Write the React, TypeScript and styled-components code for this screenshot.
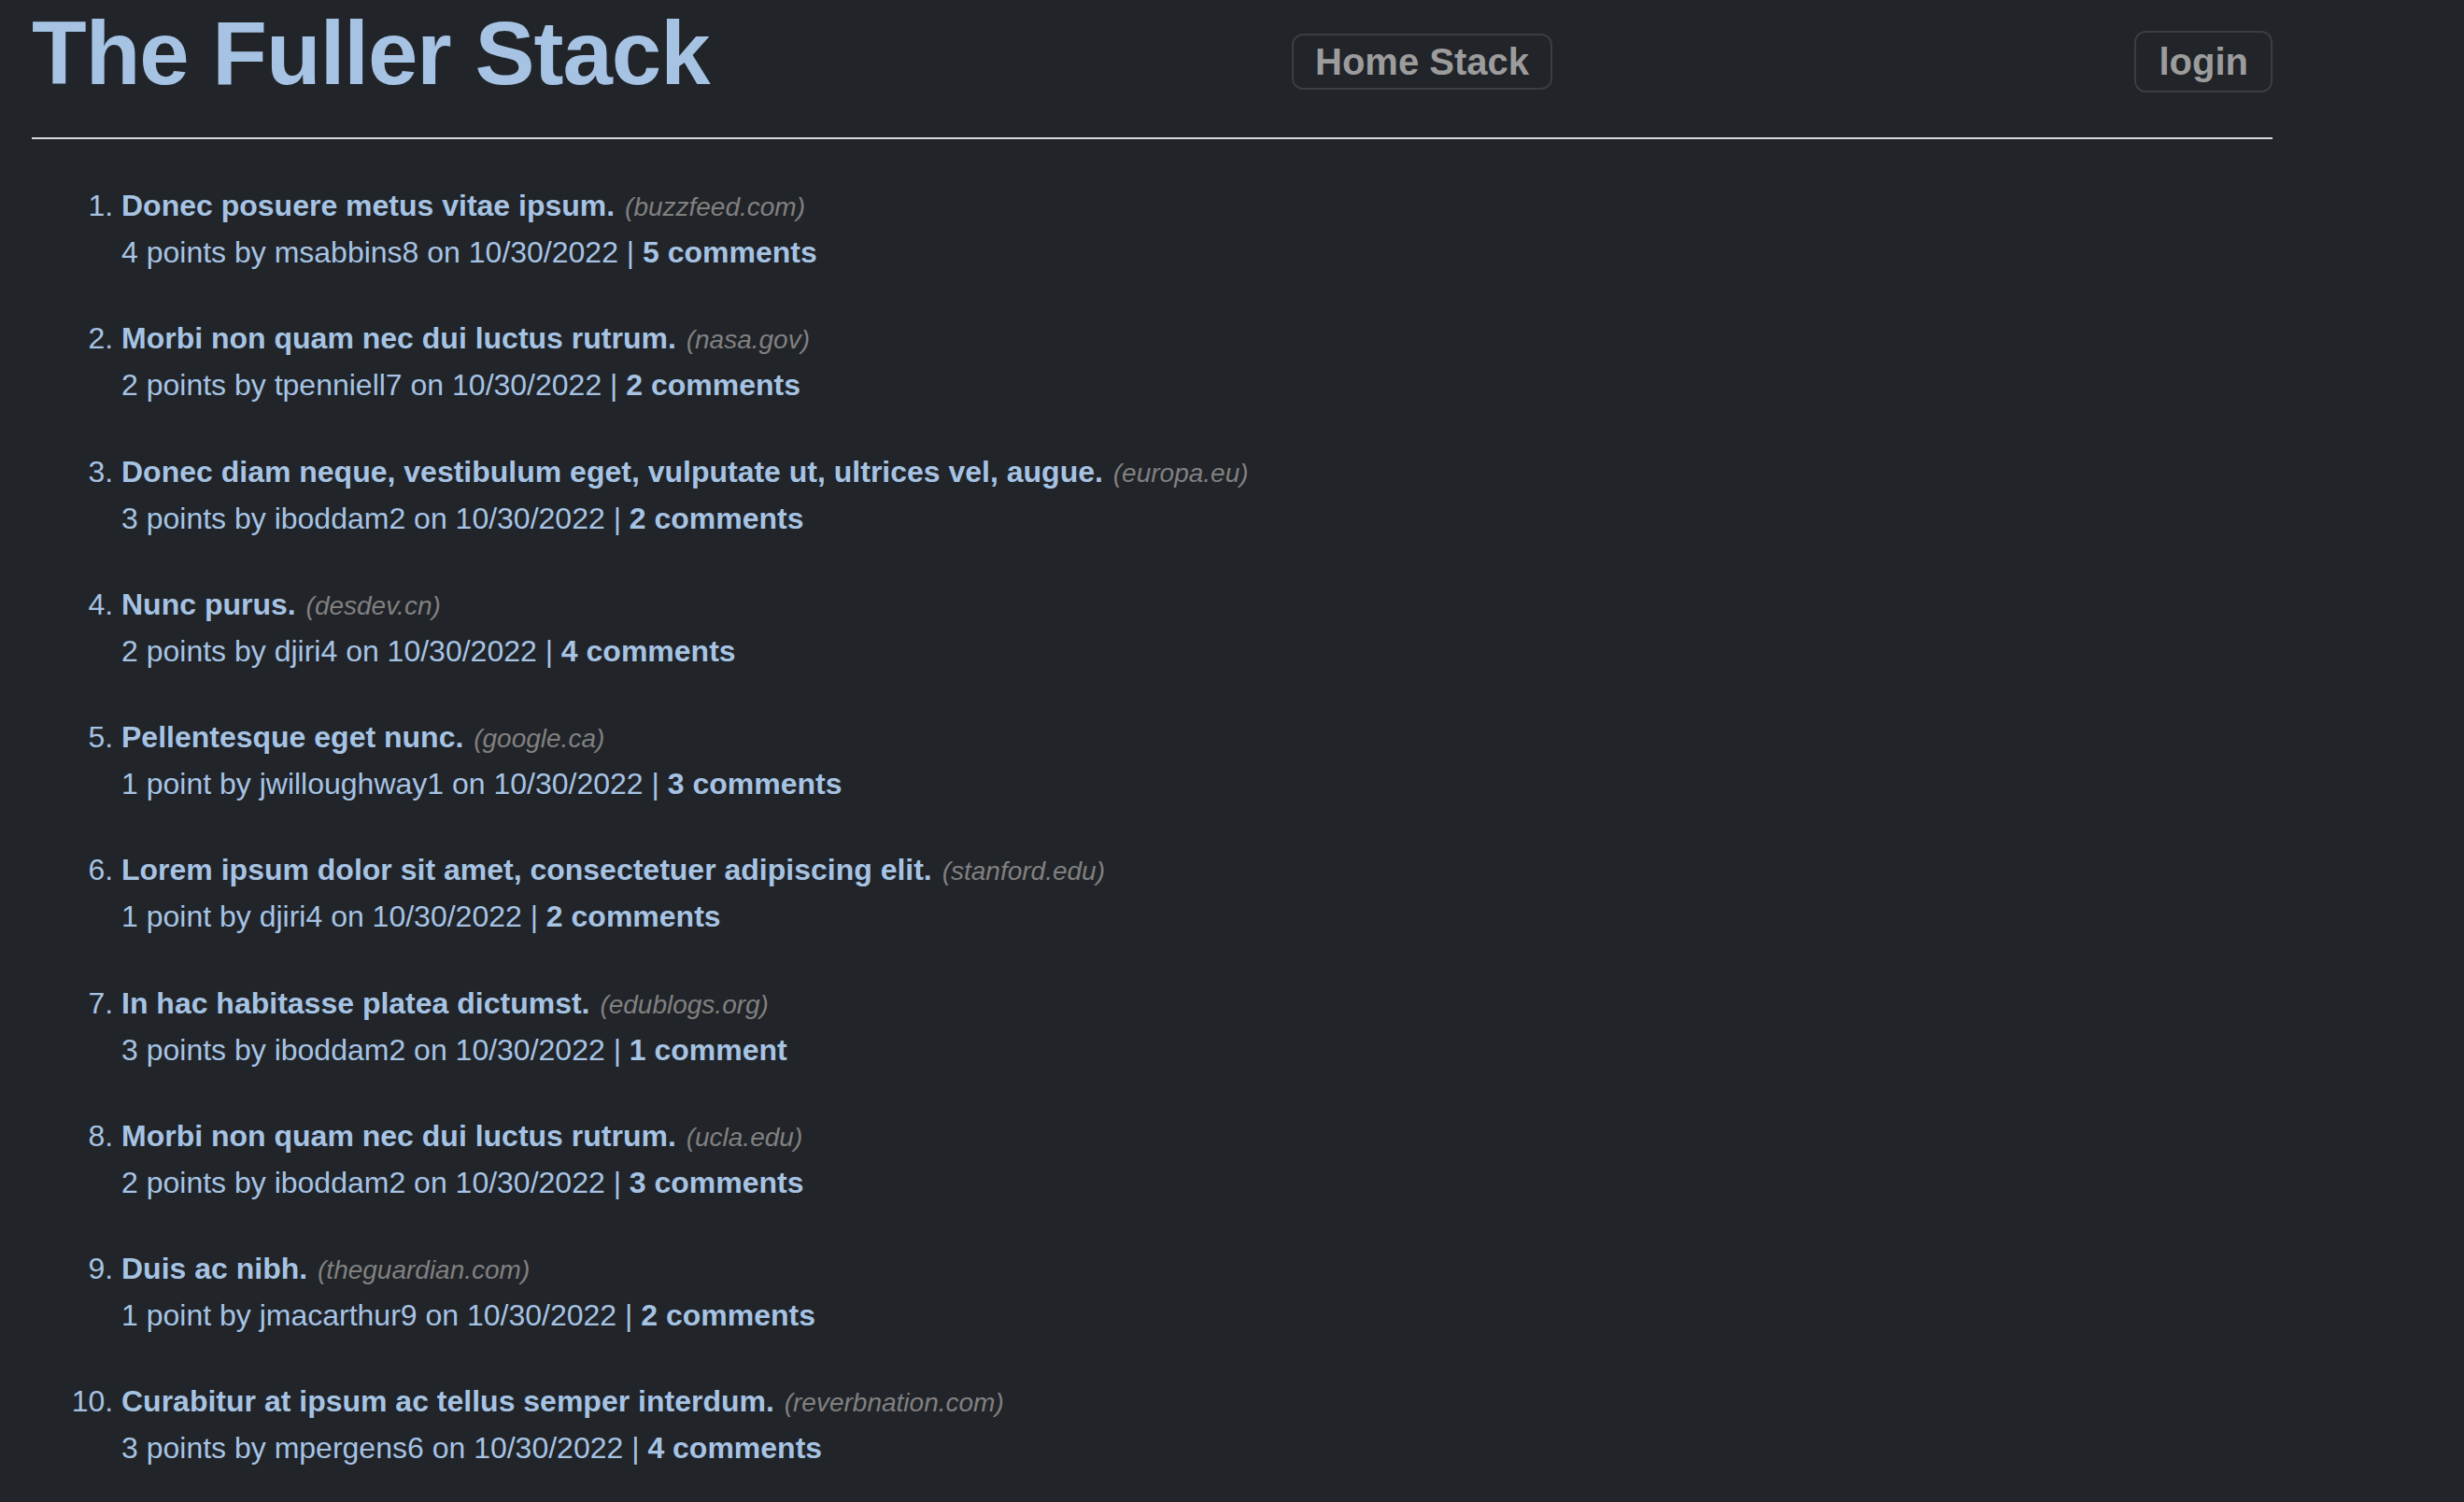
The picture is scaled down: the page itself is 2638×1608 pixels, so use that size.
import React from "react";
import styled, { createGlobalStyle } from "styled-components";

const GlobalStyle = createGlobalStyle`
  html, body {
    margin: 0;
    padding: 0;
    background: #212429;
  }
  body {
    font-family: "Liberation Sans", Arial, Helvetica, sans-serif;
    color: #a6c3e3;
  }
`;

type Story = {
  title: string;
  domain: string;
  points: number;
  user: string;
  date: string;
  comments: number;
};

const stories: Story[] = [
  { title: "Donec posuere metus vitae ipsum.", domain: "buzzfeed.com", points: 4, user: "msabbins8", date: "10/30/2022", comments: 5 },
  { title: "Morbi non quam nec dui luctus rutrum.", domain: "nasa.gov", points: 2, user: "tpenniell7", date: "10/30/2022", comments: 2 },
  { title: "Donec diam neque, vestibulum eget, vulputate ut, ultrices vel, augue.", domain: "europa.eu", points: 3, user: "iboddam2", date: "10/30/2022", comments: 2 },
  { title: "Nunc purus.", domain: "desdev.cn", points: 2, user: "djiri4", date: "10/30/2022", comments: 4 },
  { title: "Pellentesque eget nunc.", domain: "google.ca", points: 1, user: "jwilloughway1", date: "10/30/2022", comments: 3 },
  { title: "Lorem ipsum dolor sit amet, consectetuer adipiscing elit.", domain: "stanford.edu", points: 1, user: "djiri4", date: "10/30/2022", comments: 2 },
  { title: "In hac habitasse platea dictumst.", domain: "edublogs.org", points: 3, user: "iboddam2", date: "10/30/2022", comments: 1 },
  { title: "Morbi non quam nec dui luctus rutrum.", domain: "ucla.edu", points: 2, user: "iboddam2", date: "10/30/2022", comments: 3 },
  { title: "Duis ac nibh.", domain: "theguardian.com", points: 1, user: "jmacarthur9", date: "10/30/2022", comments: 2 },
  { title: "Curabitur at ipsum ac tellus semper interdum.", domain: "reverbnation.com", points: 3, user: "mpergens6", date: "10/30/2022", comments: 4 },
];

const plural = (n: number, word: string) => `${n} ${word}${n === 1 ? "" : "s"}`;

const App = () => {
  return (
    <>
      <GlobalStyle />
      <Header>
        <Title>The Fuller Stack</Title>
        <NavButton $tall={false}>Home Stack</NavButton>
        <NavButton $tall>login</NavButton>
      </Header>
      <StoryList>
        {stories.map((s, i) => (
          <StoryItem key={i}>
            <StoryTitle>
              <a>{s.title}</a> <Domain>({s.domain})</Domain>
            </StoryTitle>
            <Meta>
              {plural(s.points, "point")} by {s.user} on {s.date} |{" "}
              <Comments>{plural(s.comments, "comment")}</Comments>
            </Meta>
          </StoryItem>
        ))}
      </StoryList>
    </>
  );
};

const Header = styled.header`
  display: flex;
  justify-content: space-between;
  align-items: center;
  width: 2399px;
  height: 132px;
  margin-left: 34px;
  padding-bottom: 15px;
  border-bottom: 2px solid #d9d9d9;
`;

const Title = styled.h1`
  align-self: flex-start;
  margin: 2px 0 0;
  font-size: 96px;
  line-height: 110px;
  font-weight: 700;
  color: #a6c3e3;
  letter-spacing: -1px;
`;

const NavButton = styled.button<{ $tall: boolean }>`
  font-family: "Liberation Sans", Arial, Helvetica, sans-serif;
  font-size: 40px;
  font-weight: 700;
  color: #9c9c9c;
  background: transparent;
  border: 2px solid #3a3d42;
  border-radius: 12px;
  line-height: 46px;
  padding: ${(p) => (p.$tall ? "8px 24px" : "5px 23px")};
  cursor: pointer;
`;

const StoryList = styled.ol`
  margin: 47px 0 0;
  padding-left: 130px;
  font-size: 32px;
  line-height: 49px;
  color: #a6c3e3;

  li::marker {
    color: #a6c3e3;
  }
`;

const StoryItem = styled.li`
  margin-bottom: 43.25px;
`;

const StoryTitle = styled.div`
  font-weight: 700;

  a {
    color: #a6c3e3;
    cursor: pointer;
  }
`;

const Domain = styled.span`
  font-weight: 400;
  font-style: italic;
  font-size: 28px;
  color: #808080;
  margin-left: 2px;
`;

const Meta = styled.div`
  font-weight: 400;
  color: #a6c3e3;
`;

const Comments = styled.a`
  font-weight: 700;
  color: #a6c3e3;
  cursor: pointer;
`;

export default App;
